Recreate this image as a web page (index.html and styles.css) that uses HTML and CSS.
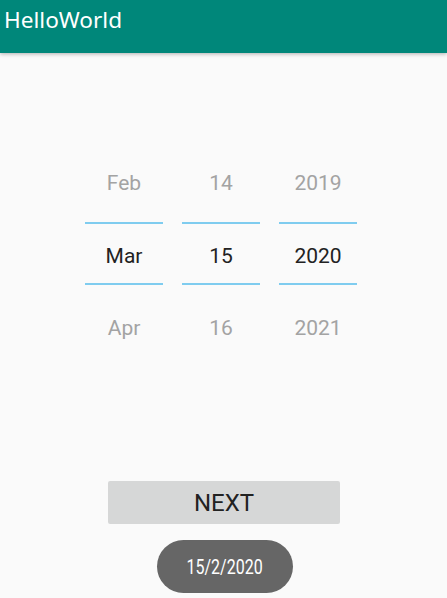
FILE: index.html
```html
<!DOCTYPE html>
<html>
<head>
<meta charset="utf-8">
<link rel="stylesheet" href="styles.css">
</head>
<body>
<header class="appbar"><span class="title">HelloWorld</span></header>
<main class="content">
  <div class="picker">
    <div class="col">
      <div class="cell dim">Feb</div>
      <div class="cell sel">Mar</div>
      <div class="cell dim last">Apr</div>
    </div>
    <div class="col">
      <div class="cell dim">14</div>
      <div class="cell sel">15</div>
      <div class="cell dim last">16</div>
    </div>
    <div class="col">
      <div class="cell dim">2019</div>
      <div class="cell sel">2020</div>
      <div class="cell dim last">2021</div>
    </div>
  </div>
  <button class="next">NEXT</button>
  <div class="toast"><span class="toast-text">15/2/2020</span></div>
</main>
</body>
</html>
```
FILE: styles.css
```css
html, body {
  margin: 0;
  padding: 0;
  background: #fafafa;
  font-family: Roboto, "Noto Sans", sans-serif;
}
.appbar {
  height: 53px;
  background: #00877a;
  box-shadow: 0 1px 4px rgba(0,0,0,0.3);
  display: flex;
  align-items: flex-start;
  position: relative;
}
.title {
  color: #fff;
  font-family: "Noto Sans", sans-serif;
  font-size: 22.6px;
  line-height: 24px;
  margin-left: 4px;
  margin-top: 8px;
}
.content {
  display: flex;
  flex-direction: column;
}
.picker {
  display: flex;
  gap: 19px;
  margin-top: 94px;
  margin-left: 85px;
}
.col {
  width: 78px;
  display: flex;
  flex-direction: column;
}
.cell {
  font-size: 21px;
  line-height: 24px;
  display: flex;
  align-items: center;
  justify-content: center;
}
.dim {
  color: #a3a3a3;
  height: 72px;
}
.sel {
  color: #222;
  margin-top: 3px;
  height: 55px;
  padding-top: 4px;
  border-top: 2px solid #7fccef;
  border-bottom: 2px solid #7fccef;
}
.last {
  margin-top: 7px;
}
.next {
  margin-top: 117px;
  margin-left: 108px;
  width: 232px;
  height: 43px;
  border: none;
  border-radius: 2px;
  background: #d6d7d7;
  color: #222;
  font-family: Roboto, sans-serif;
  font-size: 24px;
  padding: 0;
}
.toast {
  margin-top: 16px;
  margin-left: 157px;
  width: 136px;
  height: 53px;
  border-radius: 27px;
  background: #666;
  display: flex;
  align-items: center;
  justify-content: center;
}
.toast-text {
  color: #fff;
  font-size: 20px;
  display: inline-block;
  transform: scaleX(0.8);
}
```
